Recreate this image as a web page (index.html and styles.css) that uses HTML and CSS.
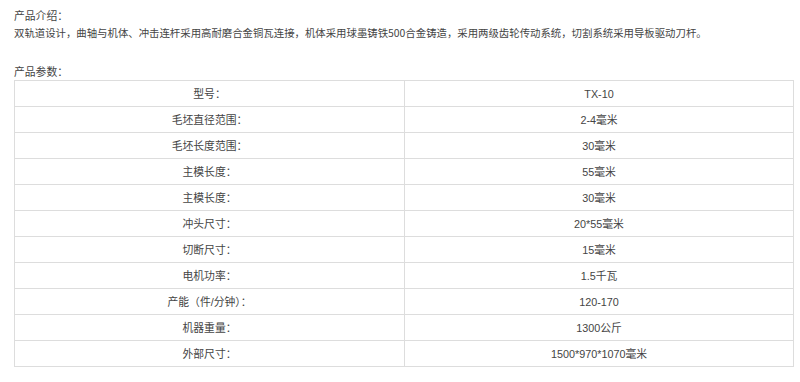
FILE: index.html
```html
<!DOCTYPE html>
<html lang="zh">
<head>
<meta charset="utf-8">
<link rel="stylesheet" href="styles.css">
</head>
<body>
<div class="page">
  <p class="label">产品介绍：</p>
  <p class="desc">双轨道设计，曲轴与机体、冲击连杆采用高耐磨合金铜瓦连接，机体采用球墨铸铁500合金铸造，采用两级齿轮传动系统，切割系统采用导板驱动刀杆。</p>
  <p class="label params">产品参数：</p>
  <table class="spec">
    <tr><td>型号：</td><td>TX-10</td></tr>
    <tr><td>毛坯直径范围：</td><td>2-4毫米</td></tr>
    <tr><td>毛坯长度范围：</td><td>30毫米</td></tr>
    <tr><td>主模长度：</td><td>55毫米</td></tr>
    <tr><td>主模长度：</td><td>30毫米</td></tr>
    <tr><td>冲头尺寸：</td><td>20*55毫米</td></tr>
    <tr><td>切断尺寸：</td><td>15毫米</td></tr>
    <tr><td>电机功率：</td><td>1.5千瓦</td></tr>
    <tr><td>产能（件/分钟）：</td><td>120-170</td></tr>
    <tr><td>机器重量：</td><td>1300公斤</td></tr>
    <tr><td>外部尺寸：</td><td>1500*970*1070毫米</td></tr>
  </table>
</div>
</body>
</html>
```

FILE: styles.css
```css
html, body {
  margin: 0;
  padding: 0;
  background: #ffffff;
}
.page {
  padding: 6px 6px 0 14px;
  font-family: "Noto Sans CJK SC", "Noto Sans", "Liberation Sans", sans-serif;
  font-size: 10.8px;
  color: #444444;
}
.label, .desc {
  margin: 0;
  line-height: 18px;
}
.desc {
  font-size: 10.4px;
}
.params {
  margin-top: 21px;
  line-height: 17px;
}
.spec {
  width: 780px;
  border-collapse: collapse;
  table-layout: fixed;
}
.spec td {
  border: 1px solid #dddddd;
  height: 25px;
  padding: 0;
  text-align: center;
  vertical-align: middle;
  font-family: "Liberation Sans", "Noto Sans CJK SC", sans-serif;
  line-height: 14px;
}
.spec td:first-child {
  width: 389px;
}
```
